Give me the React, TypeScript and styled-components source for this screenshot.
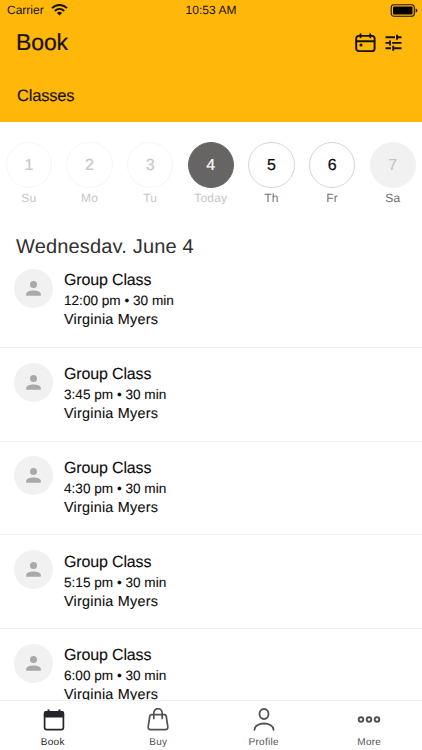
import React from "react";
import styled, { createGlobalStyle } from "styled-components";

const GlobalStyle = createGlobalStyle`
  * { box-sizing: border-box; }
  body {
    margin: 0;
    background: #fff;
    font-family: "Liberation Sans", Arial, sans-serif;
    -webkit-font-smoothing: antialiased;
    text-rendering: geometricPrecision;
  }
`;

const Screen = styled.div`
  width: 422px;
  height: 750px;
  display: flex;
  flex-direction: column;
  overflow: hidden;
  background: #fff;
  color: #0c0c0c;
`;

const Header = styled.header`
  flex: none;
  height: 122px;
  background: #ffb80a;
  color: #17110a;
`;

const StatusBar = styled.div`
  height: 20px;
  display: grid;
  grid-template-columns: 1fr auto 1fr;
  align-items: center;
  padding: 0 4px 0 7px;
  font-size: 12px;
  line-height: 20px;
`;

const Carrier = styled.div`
  display: flex;
  align-items: center;
  gap: 7px;
`;

const Clock = styled.span`
  margin-right: 3px;
  letter-spacing: 0.02px;
`;

const BatterySlot = styled.div`
  display: flex;
  justify-content: flex-end;
`;

const TitleBar = styled.div`
  height: 45px;
  display: flex;
  align-items: center;
  padding: 0 20px 0 16px;
`;

const Title = styled.h1`
  margin: 0;
  flex: 1;
  padding-bottom: 2px;
  font-size: 23px;
  line-height: 28px;
  font-weight: 400;
  letter-spacing: -0.1px;
  -webkit-text-stroke: 0.2px;
`;

const Actions = styled.div`
  display: flex;
  align-items: center;
  gap: 9px;
`;

const Section = styled.h2`
  margin: 0;
  padding: 21px 0 0 17px;
  font-size: 16.5px;
  line-height: 20px;
  font-weight: 400;
  letter-spacing: -0.18px;
  -webkit-text-stroke: 0.15px;
`;

const Week = styled.div`
  flex: none;
  display: grid;
  grid-template-columns: repeat(7, 60.67px);
  margin: 19.5px 0 0 -1.5px;
  height: 92.5px;
`;

type DayState = "past" | "today" | "open" | "closed";

const dayColors: Record<DayState, { bg: string; border: string; text: string; label: string }> = {
  past: { bg: "#fff", border: "#f6f6f6", text: "#c8c8c8", label: "#c6c6c6" },
  today: { bg: "#666564", border: "#666564", text: "#fff", label: "#c6c6c6" },
  open: { bg: "#fff", border: "#d6d6d6", text: "#0c0c0c", label: "#757575" },
  closed: { bg: "#f1f1f1", border: "#f1f1f1", text: "#c2c2c2", label: "#6c6c6c" },
};

const Day = styled.div`
  display: flex;
  flex-direction: column;
  align-items: center;
`;

const DayNumber = styled.div<{ $state: DayState }>`
  width: 46.5px;
  height: 46.5px;
  border-radius: 50%;
  display: flex;
  align-items: center;
  justify-content: center;
  padding-top: 2px;
  font-size: 16px;
  background: ${(p) => dayColors[p.$state].bg};
  border: 1px solid ${(p) => dayColors[p.$state].border};
  color: ${(p) => dayColors[p.$state].text};
  -webkit-text-stroke: ${(p) => (p.$state === "closed" ? "0" : "0.2px")};
`;

const DayLabel = styled.div<{ $state: DayState }>`
  margin-top: 3px;
  font-size: 12px;
  line-height: 15px;
  letter-spacing: 0.2px;
  color: ${(p) => dayColors[p.$state].label};
`;

const DateHeading = styled.h3`
  flex: none;
  margin: 0;
  padding-left: 16px;
  height: 19px;
  overflow: hidden;
  font-size: 20px;
  line-height: 26px;
  font-weight: 400;
  letter-spacing: 0.17px;
  color: #303030;
`;

const List = styled.div`
  flex: 1;
  min-height: 0;
  padding-top: 1px;
  overflow: hidden;
`;

const Row = styled.div`
  height: 93.75px;
  display: flex;
  gap: 11px;
  padding: 14.8px 14px 0;
  border-bottom: 1px solid #f1f1f1;
`;

const Avatar = styled.div`
  flex: none;
  width: 39px;
  height: 39px;
  border-radius: 50%;
  background: #f1f1f1;
  display: flex;
  align-items: center;
  justify-content: center;
`;

const Details = styled.div`
  padding-top: 1.7px;
  white-space: nowrap;
  -webkit-text-stroke: 0.1px;
`;

const ClassName = styled.div`
  font-size: 16px;
  line-height: 22px;
  letter-spacing: -0.15px;
`;

const Time = styled.div`
  font-size: 13.6px;
  line-height: 18px;
`;

const Trainer = styled.div`
  font-size: 14.4px;
  line-height: 20px;
  letter-spacing: 0.23px;
`;

const TabBar = styled.nav`
  flex: none;
  height: 50px;
  display: grid;
  grid-template-columns: repeat(4, 1fr);
  border-top: 1px solid #f1f1f1;
  background: #fff;
`;

const Tab = styled.div<{ $active?: boolean }>`
  display: flex;
  flex-direction: column;
  align-items: center;
  padding-top: 7px;
  font-size: 10px;
  line-height: 12px;
  letter-spacing: 0.3px;
  color: ${(p) => (p.$active ? "#25252b" : "#515158")};
  svg {
    margin-bottom: 5px;
    margin-left: ${(p) => (p.$active ? "2px" : "0")};
  }
`;

const WifiIcon = () => (
  <svg width="17" height="12" viewBox="0 0 17 12" fill="none" stroke="currentColor" strokeWidth="2">
    <path d="M1 4.1C5.4-.1 11.6-.1 16 4.1" />
    <path d="M3.8 6.9C6.6 4.3 10.4 4.3 13.2 6.9" />
    <path d="M8.5 11.5 5.9 8.9Q8.5 6.8 11.1 8.9Z" fill="currentColor" stroke="none" />
  </svg>
);

const BatteryIcon = () => (
  <svg width="28" height="13" viewBox="0 0 28 13">
    <rect x="1.2" y=".7" width="23.1" height="11.6" rx="2.8" fill="none" stroke="currentColor" strokeWidth="1.1" />
    <rect x="3" y="2.5" width="19.5" height="8" rx="1" fill="#000" />
    <path d="M25.7 4.3Q27.4 5 27.4 6.5T25.7 8.7Z" fill="currentColor" />
  </svg>
);

const CalendarIcon = () => (
  <svg width="21" height="20" viewBox="0 0 21 20" fill="none" stroke="currentColor" strokeWidth="1.9" strokeLinecap="round">
    <rect x="1.2" y="2.9" width="18.4" height="15.2" rx="2.7" />
    <path d="M1.5 8.3H19.3M5.5 1.2V4.3M15.3 1.2V4.3" />
    <circle cx="6" cy="12" r="1.5" fill="currentColor" stroke="none" />
  </svg>
);

const TuneIcon = () => (
  <svg width="17" height="18" viewBox="0 0 17 18" fill="none" stroke="currentColor" strokeWidth="1.9">
    <path d="M.5 3.3H10M12 3.3H16.5M12 .8V5.8" />
    <path d="M.5 8.9H5M7.2 8.9H16.5M5 6.4V11.4" />
    <path d="M.5 14.2H6M8.2 14.2H16.5M8.2 11.7V16.7" />
  </svg>
);

const PersonIcon = () => (
  <svg width="15" height="15" viewBox="0 0 15 15" fill="#a9a9a9">
    <circle cx="7.5" cy="3.6" r="3.5" />
    <path d="M.2 14.8V12.8C.2 10.5 4.5 9.4 7.5 9.4S14.8 10.5 14.8 12.8V14.8Z" />
  </svg>
);

const BookTabIcon = () => (
  <svg width="22" height="24" viewBox="0 0 22 24">
    <rect x="1.6" y="3.9" width="18.8" height="17.8" rx="2.2" fill="none" stroke="currentColor" strokeWidth="1.7" />
    <path d="M.9 9.6V5.1Q.9 3.1 3 3.1H4.5V1.4H6.6V3.1H15.4V1.4H17.5V3.1H19Q21.1 3.1 21.1 5.1V9.6Z" fill="currentColor" />
  </svg>
);

const BagIcon = () => (
  <svg width="22" height="24" viewBox="0 0 22 24" fill="none" stroke="currentColor" strokeWidth="1.7" strokeLinecap="round" strokeLinejoin="round">
    <path d="M4.5 6.6H17.5Q18.9 6.6 19.2 8L20.8 18.6Q21.1 21.6 18.4 21.6H3.6Q.9 21.6 1.2 18.6L2.8 8Q3.1 6.6 4.5 6.6Z" />
    <path d="M6.8 10.5V5.2C6.8-.9 15.2-.9 15.2 5.2V10.5" />
  </svg>
);

const ProfileIcon = () => (
  <svg width="22" height="24" viewBox="0 0 22 24" fill="none" stroke="currentColor" strokeWidth="1.8" strokeLinecap="round">
    <ellipse cx="11" cy="6" rx="4.5" ry="5" />
    <path d="M1.4 21.8C2.2 13.4 19.8 13.4 20.6 21.8" />
  </svg>
);

const MoreIcon = () => (
  <svg width="24" height="24" viewBox="0 0 24 24" fill="none" stroke="currentColor" strokeWidth="1.9">
    <circle cx="4" cy="11.5" r="2.3" />
    <circle cx="12" cy="11.5" r="2.3" />
    <circle cx="20" cy="11.5" r="2.3" />
  </svg>
);

const days: { n: number; label: string; state: DayState }[] = [
  { n: 1, label: "Su", state: "past" },
  { n: 2, label: "Mo", state: "past" },
  { n: 3, label: "Tu", state: "past" },
  { n: 4, label: "Today", state: "today" },
  { n: 5, label: "Th", state: "open" },
  { n: 6, label: "Fr", state: "open" },
  { n: 7, label: "Sa", state: "closed" },
];

const times = ["12:00 pm", "3:45 pm", "4:30 pm", "5:15 pm", "6:00 pm"];

export default function App() {
  return (
    <>
      <GlobalStyle />
      <Screen>
        <Header>
          <StatusBar>
            <Carrier>Carrier <WifiIcon /></Carrier>
            <Clock>10:53 AM</Clock>
            <BatterySlot><BatteryIcon /></BatterySlot>
          </StatusBar>
          <TitleBar>
            <Title>Book</Title>
            <Actions><CalendarIcon /><TuneIcon /></Actions>
          </TitleBar>
          <Section>Classes</Section>
        </Header>
        <Week>
          {days.map((d) => (
            <Day key={d.n}>
              <DayNumber $state={d.state}>{d.n}</DayNumber>
              <DayLabel $state={d.state}>{d.label}</DayLabel>
            </Day>
          ))}
        </Week>
        <DateHeading>Wednesday, June 4</DateHeading>
        <List>
          {times.map((t) => (
            <Row key={t}>
              <Avatar><PersonIcon /></Avatar>
              <Details>
                <ClassName>Group Class</ClassName>
                <Time>{t} • 30 min</Time>
                <Trainer>Virginia Myers</Trainer>
              </Details>
            </Row>
          ))}
        </List>
        <TabBar>
          <Tab $active><BookTabIcon />Book</Tab>
          <Tab><BagIcon />Buy</Tab>
          <Tab><ProfileIcon />Profile</Tab>
          <Tab><MoreIcon />More</Tab>
        </TabBar>
      </Screen>
    </>
  );
}
